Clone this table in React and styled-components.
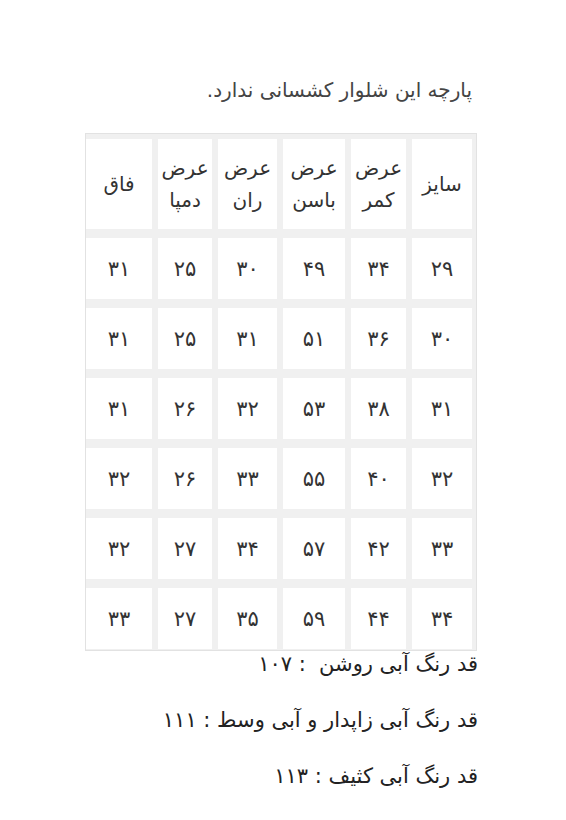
import React from 'react'
import styled, { createGlobalStyle } from 'styled-components'

const GlobalStyle = createGlobalStyle`
  html, body {
    margin: 0;
    padding: 0;
    background: #fff;
  }
  body {
    font-family: "DejaVu Sans", "Noto Sans", sans-serif;
  }
`

const Page = styled.div`
  direction: rtl;
  width: 566px;
  box-sizing: border-box;
  padding: 74px 89px 30px 85px;
`

const Note = styled.p`
  margin: 0 5px 27px 0;
  font-size: 20px;
  line-height: 32px;
  color: #444;
`

const TableBox = styled.div`
  border: 1px solid #e2e2e2;
  background: #f0f0f0;
  padding: 5px 4px 1px 0;
`

const Grid = styled.div`
  display: grid;
  grid-template-columns: 60px 55px 62px 59px 54px 66px;
  grid-template-rows: 90px repeat(6, 61px);
  column-gap: 6px;
  row-gap: 9px;
`

const Cell = styled.div`
  background: #fff;
  display: flex;
  align-items: center;
  justify-content: center;
  text-align: center;
  font-size: ${p => (p.$head ? '20px' : '21px')};
  line-height: 32px;
  color: #333;
`

const InfoList = styled.div`
  display: flex;
  flex-direction: column;
  gap: 26px;
  margin: -2px -1px 0 0;
`

const Info = styled.p`
  margin: 0;
  font-size: 21px;
  line-height: 30px;
  color: #222;
`

const head = [
  ['سایز'],
  ['عرض', 'کمر'],
  ['عرض', 'باسن'],
  ['عرض', 'ران'],
  ['عرض', 'دمپا'],
  ['فاق'],
]

const rows = [
  ['۲۹', '۳۴', '۴۹', '۳۰', '۲۵', '۳۱'],
  ['۳۰', '۳۶', '۵۱', '۳۱', '۲۵', '۳۱'],
  ['۳۱', '۳۸', '۵۳', '۳۲', '۲۶', '۳۱'],
  ['۳۲', '۴۰', '۵۵', '۳۳', '۲۶', '۳۲'],
  ['۳۳', '۴۲', '۵۷', '۳۴', '۲۷', '۳۲'],
  ['۳۴', '۴۴', '۵۹', '۳۵', '۲۷', '۳۳'],
]

export default function App() {
  return (
    <>
      <GlobalStyle />
      <Page>
        <Note>پارچه این شلوار کشسانی ندارد.</Note>
        <TableBox>
          <Grid>
            {head.map((lines, i) => (
              <Cell $head key={'h' + i}>
                <div>
                  {lines.map((l, k) => (
                    <div key={k}>{l}</div>
                  ))}
                </div>
              </Cell>
            ))}
            {rows.map((r, i) =>
              r.map((v, k) => <Cell key={i + '-' + k}>{v}</Cell>)
            )}
          </Grid>
        </TableBox>
        <InfoList>
          <Info>قد رنگ آبی روشن&nbsp; : ۱۰۷</Info>
          <Info>قد رنگ آبی زاپدار و آبی وسط : ۱۱۱</Info>
          <Info>قد رنگ آبی کثیف : ۱۱۳</Info>
        </InfoList>
      </Page>
    </>
  )
}
